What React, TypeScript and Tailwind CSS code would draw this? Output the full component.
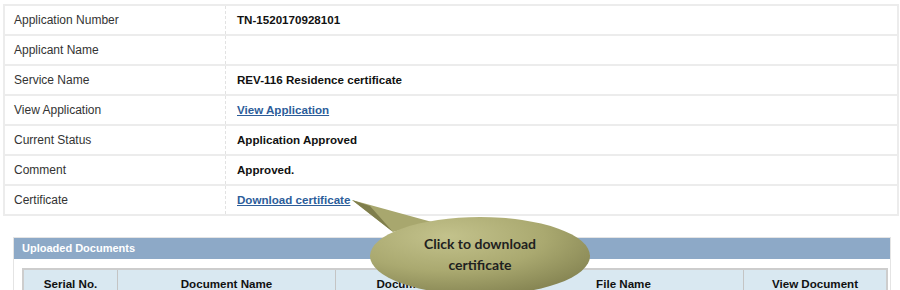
import React from 'react';

const rows: { label: string; value: string; link?: boolean }[] = [
  { label: 'Application Number', value: 'TN-1520170928101' },
  { label: 'Applicant Name', value: '' },
  { label: 'Service Name', value: 'REV-116 Residence certificate' },
  { label: 'View Application', value: 'View Application', link: true },
  { label: 'Current Status', value: 'Application Approved' },
  { label: 'Comment', value: 'Approved.' },
  { label: 'Certificate', value: 'Download certificate', link: true },
];

const columns = [
  { title: 'Serial No.', w: 'w-[94px]' },
  { title: 'Document Name', w: 'w-[218px]' },
  { title: 'Document Type', w: 'w-[168px]' },
  { title: 'File Name', w: 'w-[240px]' },
  { title: 'View Document', w: 'flex-1' },
];

const Callout: React.FC = () => (
  <div className="absolute left-[340px] top-[190px] w-[270px] h-[100px] pointer-events-none">
    <svg width="270" height="100" viewBox="0 0 270 100" className="absolute inset-0">
      <defs>
        <radialGradient id="blob" cx="35%" cy="25%" r="80%">
          <stop offset="0%" stopColor="#c3c28c" />
          <stop offset="55%" stopColor="#aaa970" />
          <stop offset="100%" stopColor="#858452" />
        </radialGradient>
      </defs>
      <polygon points="12,10 92,32 53,42" fill="#a8a76e" />
      <polygon points="12,10 30,16 53,42" fill="#7f7e4c" />
      <ellipse cx="140" cy="66" rx="110" ry="39" fill="url(#blob)" />
    </svg>
    <div className="absolute left-[30px] top-[43px] w-[220px] text-center text-[14px] leading-[21px] font-bold text-[#1f1f1f] [font-family:Lato,'Liberation_Sans',sans-serif]">
      Click to download
      <br />
      certificate
    </div>
  </div>
);

export default function App() {
  return (
    <div className="relative w-[900px] h-[290px] bg-white overflow-hidden text-[12px] [font-family:'Liberation_Sans',Arial,sans-serif]">
      {/* Application details */}
      <div className="ml-[3px] mt-[4px] w-[896px] border-2 border-[#ececec] border-b-0">
        {rows.map((r) => (
          <div key={r.label} className="flex h-[30px] border-b-2 border-[#ececec]">
            <div className="w-[221px] pl-[9px] flex items-center text-[#333] border-r border-dashed border-[#e2e2e2]">
              {r.label}
            </div>
            <div className="flex-1 pl-[11px] flex items-center font-bold text-[11.6px]">
              {r.link ? (
                <a href="#" className="text-[#2c5d9a] underline">
                  {r.value}
                </a>
              ) : (
                <span className="text-[#111]">{r.value}</span>
              )}
            </div>
          </div>
        ))}
      </div>

      {/* Uploaded documents */}
      <div className="ml-[13px] mt-[21px] w-[878px] border border-[#e4e4e4]">
        <div className="h-[21px] bg-[#8da9c7] pl-[8px] flex items-center text-white font-bold text-[11px]">
          Uploaded Documents
        </div>
        <div className="pt-[9px] pl-[8px] pr-[2px]">
          <div className="flex h-[30px] bg-[#d9e8f1] border-2 border-[#cdcdcd] border-b-0">
            {columns.map((c, i) => (
              <div
                key={c.title}
                className={`${c.w} flex items-center justify-center font-bold text-[11.6px] text-[#111] ${i < columns.length - 1 ? 'border-r border-[#c4c4c4]' : ''}`}
              >
                {c.title}
              </div>
            ))}
          </div>
        </div>
      </div>

      <Callout />
    </div>
  );
}
